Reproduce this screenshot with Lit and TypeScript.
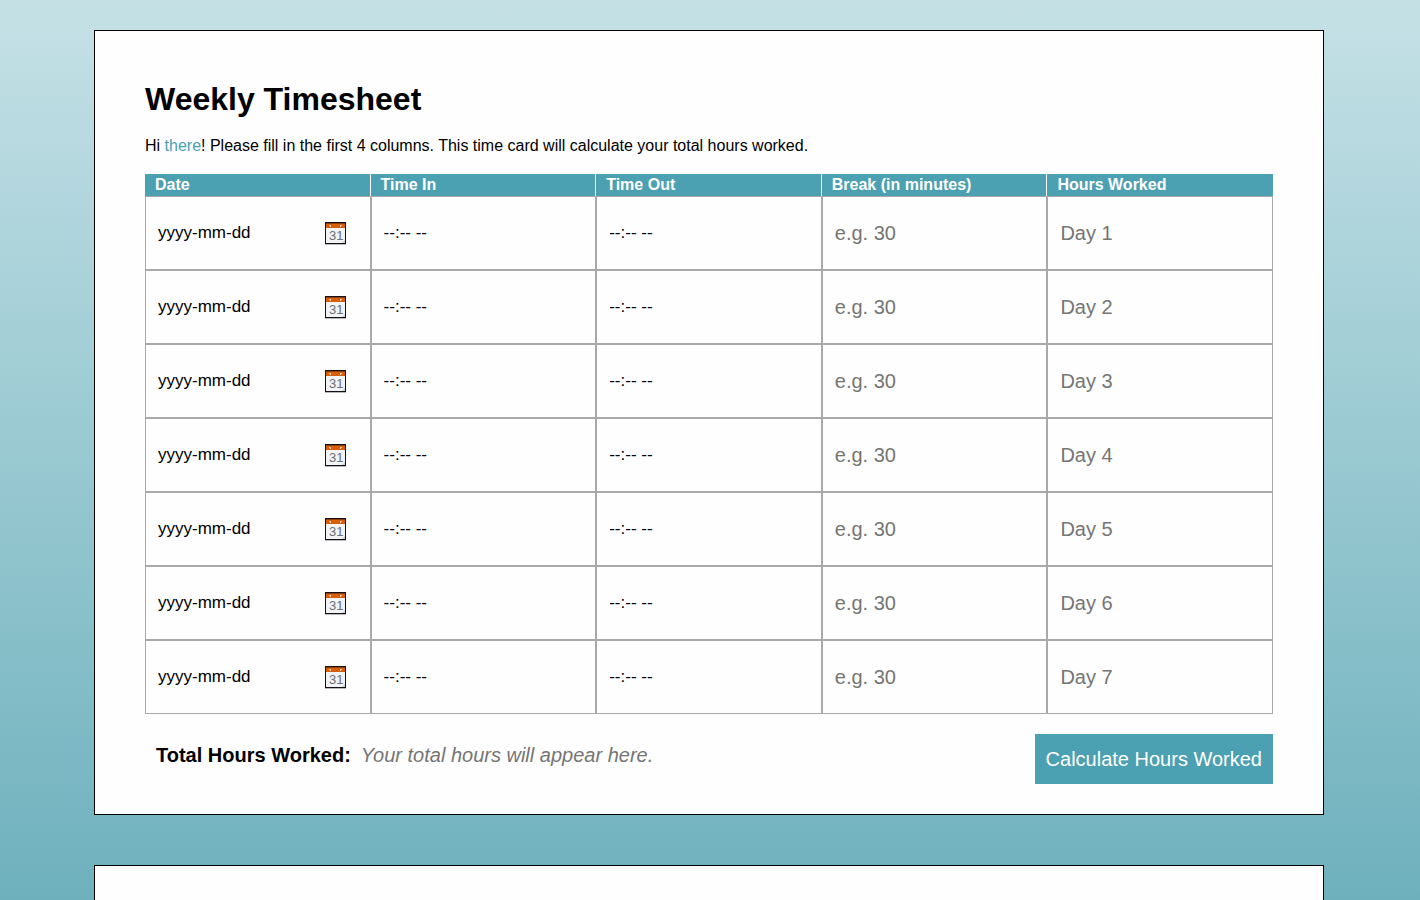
import { LitElement, html, css } from "lit";
import { customElement, state } from "lit/decorators.js";

const DAYS = [1, 2, 3, 4, 5, 6, 7];

@customElement("calendar-icon")
class CalendarIcon extends LitElement {
  static styles = css`
    :host {
      display: block;
    }
    svg {
      display: block;
    }
    .digits {
      font: 13px "Liberation Sans", Arial, sans-serif;
      fill: #6b6f78;
    }
  `;

  render() {
    return html`
      <svg width="21" height="23" viewBox="0 0 21 23" aria-hidden="true">
        <rect y="1" width="21" height="22" fill="#b9b9b9" />
        <rect width="21" height="22" fill="#15101c" />
        <rect x="1" y="1" width="19" height="20" fill="#f2f3f4" />
        <rect x="1" y="1" width="19" height="5" fill="#d65f0c" />
        <rect x="1" y="1" width="19" height="1" fill="#8d3d0b" />
        <rect x="4" y="3" width="2" height="1" fill="#f8c9a4" />
        <rect x="15" y="3" width="2" height="1" fill="#f8c9a4" />
        <rect x="5" y="4" width="1" height="1" fill="#f8c9a4" />
        <rect x="15" y="4" width="1" height="1" fill="#f8c9a4" />
        <path d="M20 18v3h-3z" fill="#c9cbd0" />
        <text class="digits" x="4" y="18">31</text>
      </svg>
    `;
  }
}

@customElement("app-root")
class AppRoot extends LitElement {
  @state() private total = "";

  static styles = css`
    :host {
      display: block;
      font-family: "Liberation Sans", Arial, sans-serif;
      font-size: 16px;
      line-height: 22px;
      color: #000;
    }
    * {
      box-sizing: border-box;
    }
    .page {
      display: flex;
      flex-direction: column;
      gap: 50px;
      height: 100vh;
      overflow: hidden;
      padding: 30px 96px 0 94px;
      background: linear-gradient(#c5e1e6, #6eb1bd);
    }
    .card {
      flex: none;
      padding: 50px 50px 30px;
      border: 1px solid #000;
      background: #fefefe;
    }
    .card.next {
      flex: 1;
      border-bottom: 0;
    }
    h1 {
      margin: 0;
      font-size: 32px;
      line-height: 36px;
    }
    .intro {
      margin: 18px 0 17px;
    }
    .intro a {
      color: #4ba0b1;
      text-decoration: none;
    }
    table {
      width: 100%;
      table-layout: fixed;
      border-spacing: 0;
      border-collapse: separate;
    }
    th {
      height: 22px;
      padding: 0 10px;
      line-height: 22px;
      text-align: left;
      color: #fff;
      background: #4ba0b1;
      border-right: 1px solid #fff;
    }
    th:last-child {
      border-right: 0;
    }
    td {
      padding: 0;
    }
    .field {
      display: flex;
      align-items: center;
      height: 74px;
      padding: 0 24px 0 12px;
      border: 1px solid #a9a9a9;
    }
    input {
      flex: 1;
      min-width: 0;
      width: 100%;
      height: 100%;
      padding: 0;
      border: 0;
      outline: 0;
      background: none;
      color: #000;
      font-family: inherit;
      font-size: 20px;
    }
    input::placeholder {
      color: #757575;
      opacity: 1;
    }
    .picker {
      font-size: 17px;
    }
    .picker::placeholder {
      color: #000;
    }
    button {
      margin: 0;
      padding: 0;
      border: 0;
      background: none;
      font-family: inherit;
      cursor: pointer;
    }
    .footer {
      display: flex;
      justify-content: space-between;
      align-items: flex-start;
      margin-top: 20px;
      font-size: 20px;
    }
    .total {
      display: flex;
      flex: 1;
      gap: 10px;
      align-items: center;
      height: 42px;
      padding-left: 11px;
    }
    .total label {
      font-weight: bold;
    }
    .total input {
      font-style: italic;
    }
    .calculate {
      height: 50px;
      padding: 0 11px;
      font-size: 20px;
      color: #fff;
      background: #4ba0b1;
    }
  `;

  private minutes(value: string) {
    const m = /^(\d{1,2}):(\d{2})\s*(am|pm)?$/i.exec(value.trim());
    if (!m) return NaN;
    const half = (m[3] || "").toLowerCase();
    const hour = half ? (Number(m[1]) % 12) + (half === "pm" ? 12 : 0) : Number(m[1]);
    return hour * 60 + Number(m[2]);
  }

  private calculate() {
    let sum = 0;
    for (const row of this.renderRoot.querySelectorAll("tbody tr")) {
      const [, start, end, pause, worked] = row.querySelectorAll("input");
      const span = this.minutes(end.value) - this.minutes(start.value) - Number(pause.value || 0);
      if (Number.isNaN(span)) continue;
      worked.value = (span / 60).toFixed(2);
      sum += span / 60;
    }
    this.total = sum.toFixed(2);
  }

  private focusDate(day: number) {
    this.renderRoot.querySelector<HTMLInputElement>(`#date-${day}`)?.focus();
  }

  private row(day: number) {
    return html`
      <tr>
        <td>
          <div class="field">
            <input class="picker" id="date-${day}" aria-label="Date ${day}" placeholder="yyyy-mm-dd" />
            <button type="button" aria-label="Pick date ${day}" @click=${() => this.focusDate(day)}>
              <calendar-icon></calendar-icon>
            </button>
          </div>
        </td>
        <td>
          <div class="field"><input class="picker" aria-label="Time in ${day}" placeholder="--:-- --" /></div>
        </td>
        <td>
          <div class="field"><input class="picker" aria-label="Time out ${day}" placeholder="--:-- --" /></div>
        </td>
        <td>
          <div class="field"><input aria-label="Break ${day}" placeholder="e.g. 30" /></div>
        </td>
        <td>
          <div class="field"><input aria-label="Hours worked ${day}" placeholder="Day ${day}" readonly /></div>
        </td>
      </tr>
    `;
  }

  render() {
    return html`
      <main class="page">
        <section class="card">
          <h1>Weekly Timesheet</h1>
          <p class="intro">
            Hi <a href="#">there</a>! Please fill in the first 4 columns. This time card will calculate your total
            hours worked.
          </p>
          <table>
            <thead>
              <tr>
                <th scope="col">Date</th>
                <th scope="col">Time In</th>
                <th scope="col">Time Out</th>
                <th scope="col">Break (in minutes)</th>
                <th scope="col">Hours Worked</th>
              </tr>
            </thead>
            <tbody>
              ${DAYS.map((day) => this.row(day))}
            </tbody>
          </table>
          <div class="footer">
            <div class="total">
              <label for="total">Total Hours Worked:</label>
              <input id="total" placeholder="Your total hours will appear here." readonly .value=${this.total} />
            </div>
            <button class="calculate" type="button" @click=${this.calculate}>Calculate Hours Worked</button>
          </div>
        </section>
        <section class="card next"></section>
      </main>
    `;
  }
}
